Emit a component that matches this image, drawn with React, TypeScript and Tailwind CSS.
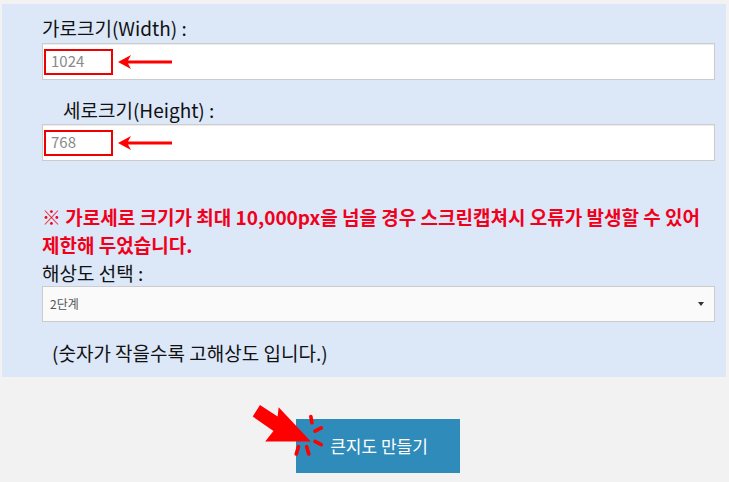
import React from 'react';

const font = { fontFamily: '"Noto Sans CJK KR", "Noto Sans", sans-serif' };

function LeftArrow() {
  return (
    <svg width="54" height="14" viewBox="0 0 54 14" className="ml-[5px]">
      <polygon points="0,7 13,0 10,5.5 54,5.5 54,8.5 10,8.5 13,14" fill="#ff0000" />
    </svg>
  );
}

function SizeInput({ value }: { value: string }) {
  return (
    <div className="flex h-[37px] w-[673px] items-center border border-[#cccccc] bg-white pl-[1px] shadow-[inset_0_1px_1px_rgba(0,0,0,0.08)]">
      <div className="flex h-[26px] w-[69px] items-center border-2 border-[#ee0000] pl-[5px] text-[15px] text-[#8a8a8a]">
        {value}
      </div>
      <LeftArrow />
    </div>
  );
}

function ClickMark() {
  return (
    <svg width="76" height="54" viewBox="0 0 72 52" className="absolute left-[-46px] top-[-17px]">
      {/* arrow pointing at the button */}
      <polygon points="2,10 9,-1 26,10 27,1 58,34 14,34 22,24" fill="#ff0000" transform="translate(0,4)" />
      <g stroke="#ff0000" strokeWidth="3.5" strokeLinecap="round">
        <line x1="58" y1="14" x2="59" y2="20" />
        <line x1="62" y1="28" x2="68" y2="25" />
        <line x1="62" y1="38" x2="68" y2="41" />
        <line x1="54" y1="43" x2="56" y2="50" />
        <line x1="46" y1="43" x2="44" y2="50" />
      </g>
    </svg>
  );
}

export default function App() {
  return (
    <div className="min-h-[482px] w-[729px] bg-[#f2f2f2] pt-[4px]" style={font}>
      {/* Settings panel */}
      <div className="ml-[2px] h-[373px] w-[724px] bg-[#dce7f8] pl-[40px] pt-[11px]">
        <p className="text-[19px] leading-[26px] text-[#111]">가로크기(Width) :</p>
        <div className="mt-[2px]">
          <SizeInput value="1024" />
        </div>

        <p className="mt-[17px] pl-[21px] text-[19px] leading-[26px] text-[#111]">세로크기(Height) :</p>
        <div className="mt-[1px]">
          <SizeInput value="768" />
        </div>

        <p className="mt-[42px] text-[19px] font-bold leading-[28px] text-[#f0001a]">
          ※ 가로세로 크기가 최대 10,000px을 넘을 경우 스크린캡쳐시 오류가 발생할 수 있어
          <br />
          제한해 두었습니다.
        </p>

        <p className="mt-[2px] text-[19px] leading-[24px] text-[#111]">해상도 선택 :</p>
        <div className="mt-[1px] flex h-[36px] w-[673px] items-center justify-between border border-[#cccccc] bg-[#fafafa] pl-[7px] pr-[10px]">
          <span className="text-[12px] text-[#555]">2단계</span>
          <svg width="6" height="4" viewBox="0 0 6 4">
            <polygon points="0,0 6,0 3,4" fill="#333" />
          </svg>
        </div>

        <p className="mt-[18px] pl-[10px] text-[19px] leading-[26px] text-[#111]">(숫자가 작을수록 고해상도 입니다.)</p>
      </div>

      {/* Action button */}
      <div className="mt-[42px] pl-[296px]">
        <button className="relative flex h-[54px] w-[164px] items-center justify-center bg-[#2e8bba] pl-[2px] text-[17px] text-white">
          <ClickMark />
          큰지도 만들기
        </button>
      </div>
    </div>
  );
}
